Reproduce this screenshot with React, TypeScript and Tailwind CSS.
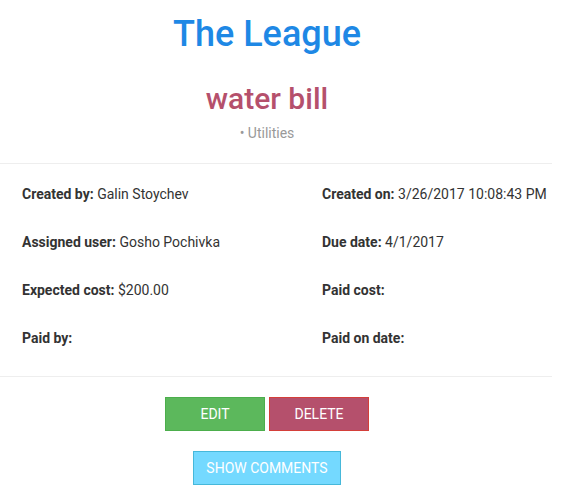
import React from 'react';

const App: React.FC = () => {
  const details = [
    { label: 'Created by:', value: 'Galin Stoychev' },
    { label: 'Created on:', value: '3/26/2017 10:08:43 PM' },
    { label: 'Assigned user:', value: 'Gosho Pochivka' },
    { label: 'Due date:', value: '4/1/2017' },
    { label: 'Expected cost:', value: '$200.00' },
    { label: 'Paid cost:', value: '' },
    { label: 'Paid by:', value: '' },
    { label: 'Paid on date:', value: '' }
  ];

  return (
    <div className="w-[552px] bg-white font-['Roboto',sans-serif] text-[#333]">
      {/* Header */}
      <div className="pr-[18px] text-center">
        <h1 className="pt-[14px] text-[36px] font-medium leading-[40px] text-[#1e88e5]">The League</h1>
        <h2 className="mt-[28px] text-[30px] font-medium leading-[34px] text-[#b5506c]">water bill</h2>
        <p className="mt-[7px] text-[14px] leading-[20px] text-[#999]">• Utilities</p>
      </div>

      <hr className="mt-[20px] border-t border-[#eee]" />

      {/* Details */}
      <div className="grid grid-cols-[300px_1fr] gap-y-[28px] px-[22px] pt-[20px] text-[14px] leading-[20px]">
        {details.map((item, index) => (
          <div key={index} className="whitespace-nowrap">
            <span className="font-bold">{item.label}</span> {item.value}
          </div>
        ))}
      </div>

      <hr className="mt-[28px] border-t border-[#eee]" />

      {/* Actions */}
      <div className="flex flex-col items-center gap-[20px] pr-[18px] pt-[20px] pb-[16px]">
        <div className="flex gap-[4px]">
          <button className="h-[34px] w-[100px] border border-[#4cae4c] bg-[#5cb85c] text-[14px] uppercase text-white">
            Edit
          </button>
          <button className="h-[34px] w-[100px] border border-[#d43f3a] bg-[#b5506c] text-[14px] uppercase text-white">
            Delete
          </button>
        </div>
        <button className="h-[34px] w-[148px] border border-[#46b8da] bg-[#74d9ff] text-[14px] uppercase text-white">
          Show comments
        </button>
      </div>
    </div>
  );
};

export default App;
